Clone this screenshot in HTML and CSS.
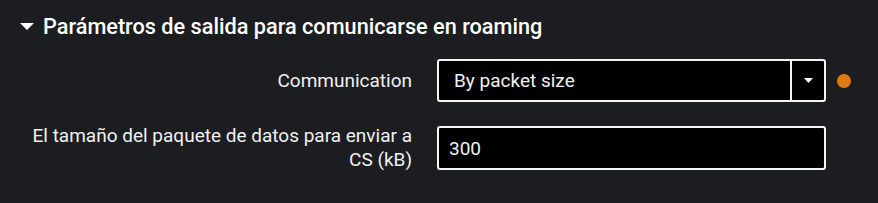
FILE: index.html
```html
<!DOCTYPE html>
<html>
<head>
<meta charset="utf-8">
<link rel="stylesheet" href="styles.css">
</head>
<body>
<section class="panel">
  <h2 class="section-title">
    <svg class="caret" width="14" height="8" viewBox="0 0 14 8"><path d="M0 0H14L7 7Z" fill="#fff"/></svg>
    <span>Parámetros de salida para comunicarse en roaming</span>
  </h2>
  <div class="form">
    <label class="label">Communication</label>
    <div class="select">
      <span class="select-value">By packet size</span>
      <span class="select-btn"><svg width="9" height="5" viewBox="0 0 9 5"><path d="M0 0H9L4.5 5Z" fill="#fff"/></svg></span>
    </div>
    <span class="dot"></span>

    <label class="label">El tamaño del paquete de datos para enviar a CS (kB)</label>
    <div class="input">300</div>
    <span></span>
  </div>
</section>
</body>
</html>
```
FILE: styles.css
```css
html, body {
  margin: 0;
  padding: 0;
  background: #1c1d21;
  color: #f2f2f2;
  font-family: Roboto, "Liberation Sans", sans-serif;
}
.panel {
  width: 878px;
  height: 203px;
  box-sizing: border-box;
  padding-top: 12px;
}
.section-title {
  margin: 0;
  display: flex;
  align-items: center;
  gap: 9px;
  padding-left: 20px;
  font-size: 21.7px;
  font-weight: 500;
  line-height: 30px;
  color: #fff;
}
.caret {
  display: block;
}
.form {
  margin-top: 17px;
  display: grid;
  grid-template-columns: 390px 389px 14px;
  column-gap: 25px;
  row-gap: 22px;
  padding-left: 22px;
  align-items: center;
}
.form > .dot { margin-left: -14px; }
.label {
  text-align: right;
  font-size: 19px;
  line-height: 24px;
  color: #f0f0f0;
}
.select, .input {
  height: 43px;
  box-sizing: border-box;
  border: 2px solid #f4f4f4;
  border-radius: 3px;
  background: #000;
  font-size: 19px;
  color: #f0f0f0;
}
.select {
  display: flex;
  align-items: stretch;
}
.select-value {
  flex: 1;
  display: flex;
  align-items: center;
  padding-left: 15px;
}
.select-btn {
  width: 32px;
  border-left: 2px solid #f4f4f4;
  display: flex;
  align-items: center;
  justify-content: center;
}
.input {
  height: 44px;
  display: flex;
  align-items: center;
  padding-left: 10px;
}
.dot {
  width: 14px;
  height: 14px;
  border-radius: 50%;
  background: #e07a16;
}
```
